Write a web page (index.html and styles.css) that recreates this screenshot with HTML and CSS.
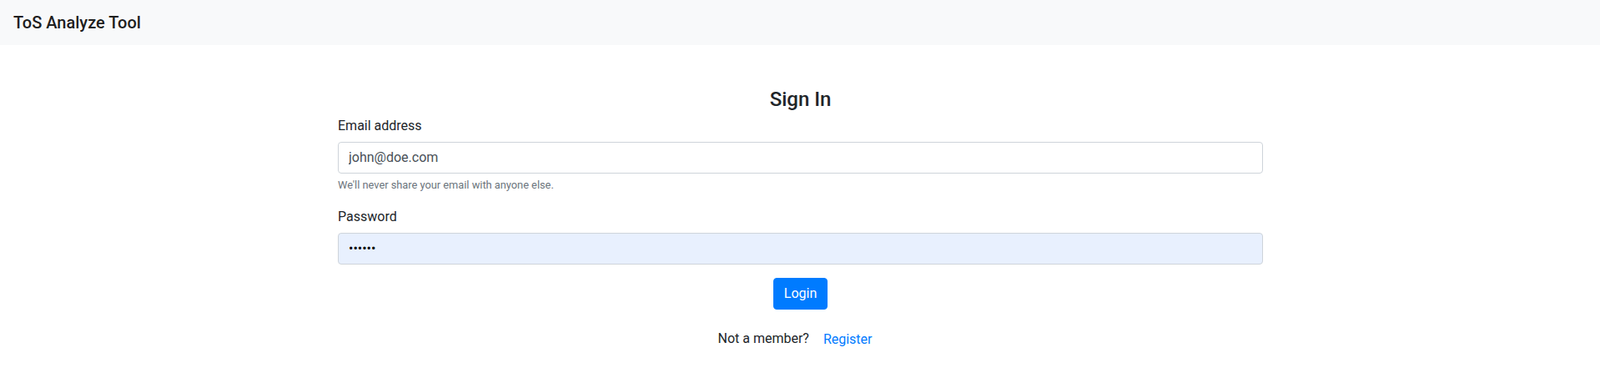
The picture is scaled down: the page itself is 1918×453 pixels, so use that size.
FILE: index.html
```html
<!DOCTYPE html>
<html lang="en">
<head>
<meta charset="utf-8">
<title>ToS Analyze Tool</title>
<link rel="stylesheet" href="styles.css">
</head>
<body>
<nav class="navbar">
  <a class="brand" href="#">ToS Analyze Tool</a>
</nav>
<main class="container">
  <h4 class="title">Sign In</h4>
  <form class="form">
    <div class="group">
      <label class="label" for="email">Email address</label>
      <input class="control" id="email" type="email" value="john@doe.com">
      <small class="help">We'll never share your email with anyone else.</small>
    </div>
    <div class="group">
      <label class="label" for="password">Password</label>
      <input class="control control-filled" id="password" type="password" value="123456">
    </div>
    <div class="actions">
      <button class="btn btn-primary" type="button">Login</button>
    </div>
  </form>
  <p class="member">Not a member? <a class="btn btn-link" href="#">Register</a></p>
</main>
</body>
</html>
```
FILE: styles.css
```css
* { box-sizing: border-box; }
html, body { margin: 0; padding: 0; }
body {
  font-family: "Segoe UI", Roboto, "Liberation Sans", sans-serif;
  font-size: 16px;
  line-height: 1.5;
  color: #212529;
  background: #fff;
}
.navbar {
  display: flex;
  align-items: center;
  height: 54px;
  padding: 0 16px;
  background: #f8f9fa;
}
.brand {
  font-size: 20px;
  font-weight: 500;
  line-height: 30px;
  color: rgba(0, 0, 0, 0.9);
  text-decoration: none;
  margin-top: -1px;
}
.container {
  width: 1110px;
  margin: 0 auto;
  padding-left: 1px;
}
.title {
  margin: 51px 0 4px;
  font-size: 24px;
  font-weight: 500;
  line-height: 1.2;
  text-align: center;
}
.form { margin: 0; }
.group { margin-bottom: 16px; }
.label {
  display: inline-block;
  padding-top: 1px;
  margin-bottom: 7px;
}
.control {
  display: block;
  width: 100%;
  height: 38px;
  padding: 6px 12px;
  font-family: inherit;
  font-size: 16px;
  line-height: 1.5;
  color: #495057;
  background: #fff;
  border: 1px solid #ced4da;
  border-radius: 4px;
  outline: none;
}
.control-filled {
  background: #e8f0fe;
  color: #000;
}
.help {
  display: block;
  margin-top: 4px;
  font-size: 12.8px;
  color: #6c757d;
}
.actions {
  display: flex;
  justify-content: center;
}
.btn {
  display: inline-block;
  padding: 6px 12px;
  font-family: inherit;
  font-size: 16px;
  line-height: 1.5;
  border: 1px solid transparent;
  border-radius: 4px;
  text-decoration: none;
  vertical-align: middle;
  cursor: pointer;
}
.btn-primary {
  color: #fff;
  background: #007bff;
  border-color: #007bff;
}
.btn-link {
  color: #007bff;
  background: transparent;
}
.member {
  margin: 17px 0 0;
  text-align: center;
}
```
